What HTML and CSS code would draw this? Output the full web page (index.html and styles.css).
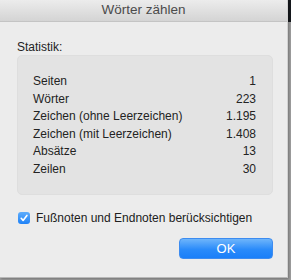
FILE: index.html
```html
<!DOCTYPE html>
<html lang="de">
<head>
<meta charset="utf-8">
<title>Wörter zählen</title>
<link rel="stylesheet" href="styles.css">
</head>
<body>
<div class="window">
  <div class="titlebar">Wörter zählen</div>
  <div class="content">
    <div class="section-label">Statistik:</div>
    <div class="stats">
      <span class="label">Seiten</span><span class="value">1</span>
      <span class="label">Wörter</span><span class="value">223</span>
      <span class="label">Zeichen (ohne Leerzeichen)</span><span class="value">1.195</span>
      <span class="label">Zeichen (mit Leerzeichen)</span><span class="value">1.408</span>
      <span class="label">Absätze</span><span class="value">13</span>
      <span class="label">Zeilen</span><span class="value">30</span>
    </div>
    <label class="check-row">
      <span class="checkbox"><svg width="12" height="12" viewBox="0 0 12 12"><path d="M3.2 6.3 L5.1 8.4 L8.9 3.4" fill="none" stroke="#fff" stroke-width="1.6" stroke-linecap="round" stroke-linejoin="round"/></svg></span>
      <span class="check-text">Fußnoten und Endnoten berücksichtigen</span>
    </label>
    <div class="actions">
      <button class="ok">OK</button>
    </div>
  </div>
</div>
</body>
</html>
```
FILE: styles.css
```css
html, body {
  margin: 0;
  padding: 0;
}
body {
  width: 291px;
  height: 280px;
  overflow: hidden;
  background: linear-gradient(to bottom, #15181c 0, #15181c 22px, #9c9c9c 22px, #9c9c9c 100%);
  font-family: "Liberation Sans", Arial, sans-serif;
  color: #232323;
}
.window {
  width: 288px;
  height: 278px;
  background: #ececec;
  box-sizing: border-box;
  border-right: 1px solid #d2d2d2;
  border-bottom: 1px solid #b8b8b8;
  box-shadow: 1px 1px 2px rgba(0,0,0,0.25);
}
.titlebar {
  height: 21px;
  border-bottom: 1px solid #c4c4c4;
  background: linear-gradient(to bottom, #ececec, #d4d4d4);
  text-align: center;
  font-size: 13.5px;
  line-height: 20px;
  color: #4b4b4b;
}
.content {
  padding: 18px 14px 0 17px;
}
.section-label {
  font-size: 12px;
  line-height: 14px;
  margin-bottom: 1px;
}
.stats {
  display: grid;
  grid-template-columns: 1fr auto;
  background: #e3e3e3;
  border: 1px solid #dedede;
  border-radius: 5px;
  padding: 17px 16px 16px 15px;
  font-size: 12px;
  line-height: 17.5px;
  height: 140px;
  box-sizing: border-box;
}
.value {
  text-align: right;
}
.check-row {
  display: flex;
  align-items: center;
  margin-top: 16px;
  margin-left: 1px;
  font-size: 12px;
  line-height: 14px;
  gap: 6px;
}
.checkbox {
  width: 12px;
  height: 12px;
  border-radius: 3px;
  background: linear-gradient(to bottom, #5eacfb, #1f82f7);
  display: flex;
}
.check-text {
  color: #202020;
}
.actions {
  display: flex;
  justify-content: flex-end;
  margin-top: 13px;
}
.ok {
  width: 94px;
  height: 21px;
  border: 1px solid #3d8cf0;
  border-radius: 4px;
  background: linear-gradient(to bottom, #6eb5fb, #2a8bfa 55%, #1a7ff9);
  color: #fff;
  font-family: "Liberation Sans", Arial, sans-serif;
  font-size: 13px;
  line-height: 19px;
  padding: 0;
}
```
